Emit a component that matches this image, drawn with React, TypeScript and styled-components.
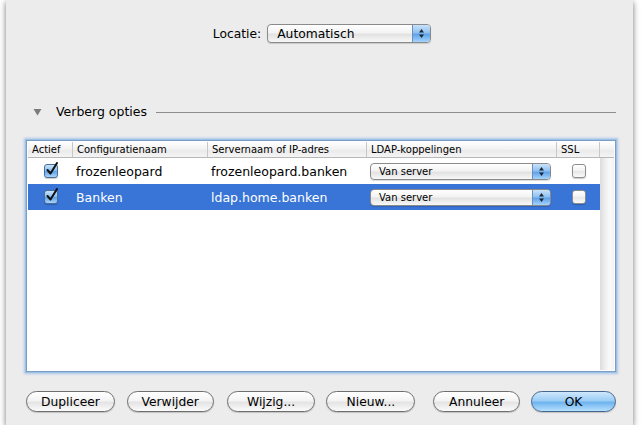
import React from 'react';
import styled, { createGlobalStyle } from 'styled-components';

const GlobalStyle = createGlobalStyle`
  html, body {
    margin: 0;
    padding: 0;
    background: #ffffff;
  }
  body {
    font-family: "DejaVu Sans", "Liberation Sans", sans-serif;
    color: #000;
  }
`

const Sheet = styled.div`
  margin-left: 6px;
  width: 627px;
  height: 425px;
  background: #ececec;
  box-shadow: 0 2px 6px rgba(0, 0, 0, 0.55);
  box-sizing: border-box;
  padding: 24px 17px 0 20px;
  display: flex;
  flex-direction: column;
`

const LocatieRow = styled.div`
  display: flex;
  align-items: center;
  justify-content: center;
  gap: 6px;
  padding-left: 2px;
`

const Label = styled.span`
  font-size: 12.3px;
`

const Popup = styled.div<{ $width: number; $small?: boolean }>`
  width: ${p => p.$width}px;
  height: ${p => (p.$small ? 17 : 19)}px;
  box-sizing: border-box;
  border: 1px solid #8a8a8a;
  border-radius: 4px;
  background: linear-gradient(#ffffff 0%, #f3f3f3 45%, #e2e2e2 55%, #f7f7f7 100%);
  box-shadow: 0 1px 1px rgba(0, 0, 0, 0.15);
  display: flex;
  align-items: stretch;
  overflow: hidden;
  font-size: ${p => (p.$small ? 10 : 12.3)}px;
  color: #000;
`

const PopupText = styled.span<{ $small?: boolean }>`
  flex: 1;
  padding-left: ${p => (p.$small ? 8 : 9)}px;
  display: flex;
  align-items: center;
`

const PopupArrows = styled.span`
  width: 17px;
  border-left: 1px solid #6b8fb8;
  background: linear-gradient(#c8e2fb 0%, #8fc1f1 45%, #5ea3ea 55%, #a7d3fb 100%);
  display: flex;
  align-items: center;
  justify-content: center;
`

const Arrows = () => (
  <svg width="7" height="11" viewBox="0 0 7 11">
    <path d="M3.5 1 L6 4.5 L1 4.5 Z" fill="#1d2633" />
    <path d="M3.5 10 L6 6.5 L1 6.5 Z" fill="#1d2633" />
  </svg>
)

const DisclosureRow = styled.div`
  margin-top: 61px;
  display: flex;
  align-items: center;
  padding-left: 7px;
`

const DisclosureLabel = styled.span`
  font-size: 12.5px;
  white-space: nowrap;
  margin-left: 14px;
`

const Rule = styled.div`
  flex: 1;
  height: 1px;
  background: #8c8c8c;
  margin-left: 9px;
  margin-top: 2px;
`

const Table = styled.div`
  margin-top: 21px;
  height: 232px;
  box-sizing: border-box;
  border: 1px solid #7d9ec4;
  box-shadow: 0 0 0 1px #9cc0e8, 0 0 2px 2px rgba(120, 170, 225, 0.55);
  background: #fff;
  display: flex;
  flex-direction: column;
  padding: 1px;
`

const cols = '45px 135px 159px 190px 43px 1fr'

const HeaderRow = styled.div`
  display: grid;
  grid-template-columns: ${cols};
  height: 15px;
  background: linear-gradient(#ffffff, #f1f1f1 50%, #e9e9e9 51%, #f4f4f4);
  border-bottom: 1px solid #b7b7b7;
`

const HeaderCell = styled.div<{ $last?: boolean }>`
  font-size: 10px;
  line-height: 15px;
  padding-left: 4px;
  border-right: ${p => (p.$last ? 'none' : '1px solid #c7c7c7')};
  white-space: nowrap;
  overflow: hidden;
`

const Body = styled.div`
  flex: 1;
  display: flex;
`

const Rows = styled.div`
  flex: 1;
  display: flex;
  flex-direction: column;
`

const Scroller = styled.div`
  width: 14px;
  background: linear-gradient(90deg, #dcdcdc, #f0f0f0 40%, #fafafa 70%, #f2f2f2);
`

const Row = styled.div<{ $selected?: boolean }>`
  display: grid;
  grid-template-columns: 45px 135px 159px 190px 43px;
  height: 26px;
  align-items: center;
  background: ${p => (p.$selected ? '#3875d7' : '#ffffff')};
  color: ${p => (p.$selected ? '#ffffff' : '#000000')};
`

const Cell = styled.div<{ $center?: boolean }>`
  font-size: 12.5px;
  padding-left: ${p => (p.$center ? 0 : 3)}px;
  display: flex;
  justify-content: ${p => (p.$center ? 'center' : 'flex-start')};
  white-space: nowrap;
`

const PopupCell = styled.div`
  padding-left: 3px;
`

const Check = styled.div<{ $checked?: boolean }>`
  width: 14px;
  height: 14px;
  box-sizing: border-box;
  border: 1px solid ${p => (p.$checked ? '#4a6e98' : '#8d8d8d')};
  border-radius: 3px;
  background: ${p =>
    p.$checked
      ? 'linear-gradient(#c9e3fb 0%, #8ec0ef 45%, #5ea2e8 55%, #a9d4fb 100%)'
      : 'linear-gradient(#ffffff, #f1f1f1 50%, #e6e6e6 51%, #fafafa)'};
  box-shadow: 0 1px 1px rgba(0, 0, 0, 0.2);
  position: relative;
`

const Tick = styled.svg`
  position: absolute;
  left: 1px;
  top: -3px;
`

const Checkbox = ({ checked }: { checked?: boolean }) => (
  <Check $checked={checked}>
    {checked && (
      <Tick width="13" height="14" viewBox="0 0 13 14">
        <path d="M1.5 8 L4.5 11.5 L11 1" stroke="#111" strokeWidth="2" fill="none" strokeLinecap="round" strokeLinejoin="round" />
      </Tick>
    )}
  </Check>
)

const ButtonBar = styled.div`
  margin-top: 19px;
  display: flex;
  align-items: center;
`

const Button = styled.div<{ $width: number; $gap: number; $primary?: boolean }>`
  width: ${p => p.$width}px;
  margin-left: ${p => p.$gap}px;
  height: 21px;
  box-sizing: border-box;
  border-radius: 11px;
  border: 1px solid ${p => (p.$primary ? '#46688f' : '#6e6e6e')};
  background: ${p =>
    p.$primary
      ? 'linear-gradient(#cfe7fd 0%, #9ccdf6 45%, #6fb3ef 55%, #b6e0fe 100%)'
      : 'linear-gradient(#ffffff 0%, #f4f4f4 45%, #e4e4e4 55%, #fbfbfb 100%)'};
  box-shadow: 0 1px 1px rgba(0, 0, 0, 0.18);
  font-size: 12.3px;
  display: flex;
  align-items: center;
  justify-content: center;
`

const Triangle = () => (
  <svg width="9" height="8" viewBox="0 0 9 8">
    <path d="M0.5 1 L8.5 1 L4.5 7.5 Z" fill="#7a7a7a" />
  </svg>
)

const rows = [
  { actief: true, naam: 'frozenleopard', server: 'frozenleopard.banken', selected: false },
  { actief: true, naam: 'Banken', server: 'ldap.home.banken', selected: true },
]

const buttons = [
  { label: 'Dupliceer', width: 89, gap: 0 },
  { label: 'Verwijder', width: 87, gap: 12 },
  { label: 'Wijzig...', width: 89, gap: 13 },
  { label: 'Nieuw...', width: 89, gap: 11 },
  { label: 'Annuleer', width: 87, gap: 18 },
  { label: 'OK', width: 85, gap: 11, primary: true },
]

export default function App() {
  return (
    <>
      <GlobalStyle />
      <Sheet>
        <LocatieRow>
          <Label>Locatie:</Label>
          <Popup $width={164}>
            <PopupText>Automatisch</PopupText>
            <PopupArrows>
              <Arrows />
            </PopupArrows>
          </Popup>
        </LocatieRow>

        <DisclosureRow>
          <Triangle />
          <DisclosureLabel>Verberg opties</DisclosureLabel>
          <Rule />
        </DisclosureRow>

        <Table>
          <HeaderRow>
            <HeaderCell>Actief</HeaderCell>
            <HeaderCell>Configuratienaam</HeaderCell>
            <HeaderCell>Servernaam of IP-adres</HeaderCell>
            <HeaderCell>LDAP-koppelingen</HeaderCell>
            <HeaderCell>SSL</HeaderCell>
            <HeaderCell $last />
          </HeaderRow>
          <Body>
            <Rows>
              {rows.map(r => (
                <Row key={r.naam} $selected={r.selected}>
                  <Cell $center>
                    <Checkbox checked={r.actief} />
                  </Cell>
                  <Cell>{r.naam}</Cell>
                  <Cell>{r.server}</Cell>
                  <PopupCell>
                    <Popup $width={181} $small>
                      <PopupText $small>Van server</PopupText>
                      <PopupArrows>
                        <Arrows />
                      </PopupArrows>
                    </Popup>
                  </PopupCell>
                  <Cell $center>
                    <Checkbox />
                  </Cell>
                </Row>
              ))}
            </Rows>
            <Scroller />
          </Body>
        </Table>

        <ButtonBar>
          {buttons.map(b => (
            <Button key={b.label} $width={b.width} $gap={b.gap} $primary={b.primary}>
              {b.label}
            </Button>
          ))}
        </ButtonBar>
      </Sheet>
    </>
  )
}
